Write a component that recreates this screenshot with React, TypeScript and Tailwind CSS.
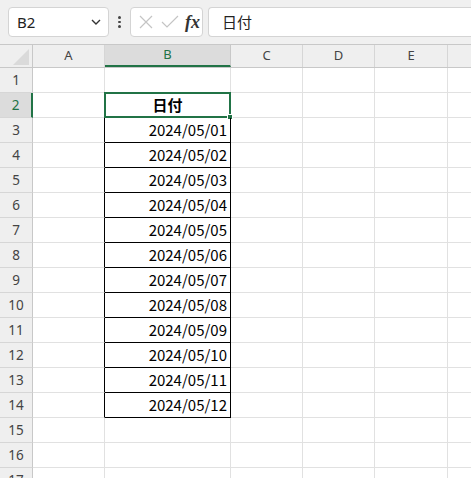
import React from "react";

const cols = [
  { key: "A", w: "w-[72px]" },
  { key: "B", w: "w-[126px]" },
  { key: "C", w: "w-[72px]" },
  { key: "D", w: "w-[72px]" },
  { key: "E", w: "w-[73px]" },
  { key: "F", w: "w-[60px]" },
];

const dates = [
  "2024/05/01",
  "2024/05/02",
  "2024/05/03",
  "2024/05/04",
  "2024/05/05",
  "2024/05/06",
  "2024/05/07",
  "2024/05/08",
  "2024/05/09",
  "2024/05/10",
  "2024/05/11",
  "2024/05/12",
];

const font = { fontFamily: '"Noto Sans CJK JP", "Noto Sans", sans-serif' };

const Toolbar: React.FC = () => (
  <div className="flex h-[44px] items-start bg-[#f0f0f0] pt-[7px] pl-[8px]">
    <div className="flex h-[30px] w-[101px] items-center justify-between rounded-[4px] border border-[#d4d4d4] bg-white pl-[8px] pr-[6px]">
      <span className="text-[15px] text-[#222]">B2</span>
      <svg width="12" height="12" viewBox="0 0 12 12">
        <path d="M2 4 L6 8 L10 4" fill="none" stroke="#333" strokeWidth="1.4" />
      </svg>
    </div>
    <div className="flex h-[30px] w-[21px] flex-col items-center justify-center gap-[2px]">
      <span className="h-[2.5px] w-[2.5px] rounded-full bg-[#444]" />
      <span className="h-[2.5px] w-[2.5px] rounded-full bg-[#444]" />
      <span className="h-[2.5px] w-[2.5px] rounded-full bg-[#444]" />
    </div>
    <div className="flex h-[30px] w-[73px] items-center rounded-[4px] border border-[#d4d4d4] bg-white pl-[6px]">
      <svg width="16" height="16" viewBox="0 0 16 16" className="ml-[1px]">
        <path d="M2 2 L14 14 M14 2 L2 14" fill="none" stroke="#c4c4c4" strokeWidth="1.2" />
      </svg>
      <svg width="18" height="16" viewBox="0 0 18 16" className="ml-[7px]">
        <path d="M1 8 L6 13 L17 2" fill="none" stroke="#c4c4c4" strokeWidth="1.2" />
      </svg>
      <span
        className="ml-[6px] text-[18px] font-bold italic leading-none text-[#333]"
        style={{ fontFamily: '"Liberation Serif", "DejaVu Serif", serif' }}
      >
        fx
      </span>
    </div>
    <div className="ml-[5px] flex h-[30px] flex-1 items-center rounded-l-[4px] border border-r-0 border-[#d4d4d4] bg-white pl-[13px]">
      <span className="text-[15px] text-[#222]" style={font}>
        日付
      </span>
    </div>
  </div>
);

const HeaderRow: React.FC = () => (
  <div className="flex h-[24px] border-t border-b border-[#c8c8c8] bg-[#efefef]">
    <div className="relative w-[33px] shrink-0 border-r border-[#c8c8c8]">
      <svg width="16" height="16" viewBox="0 0 16 16" className="absolute right-[3px] bottom-[2px]">
        <path d="M16 0 L16 16 L0 16 Z" fill="#dadada" />
      </svg>
    </div>
    {cols.map((c) =>
      c.key === "B" ? (
        <div
          key={c.key}
          className={`${c.w} flex shrink-0 items-center justify-center border-r border-b-2 border-r-[#c8c8c8] border-b-[#217346] bg-[#dcdcdc] text-[13px] text-[#217346]`}
        >
          {c.key}
        </div>
      ) : (
        <div
          key={c.key}
          className={`${c.w} flex shrink-0 items-center justify-center border-r border-[#d6d6d6] text-[13px] text-[#444]`}
        >
          {c.key === "F" ? "" : c.key}
        </div>
      )
    )}
  </div>
);

const Row: React.FC<{ n: number }> = ({ n }) => {
  const selected = n === 2;
  const date = n >= 3 && n <= 14 ? dates[n - 3] : null;
  return (
    <div className="flex h-[25px]">
      <div
        className={`flex w-[33px] shrink-0 items-center justify-center border-b border-[#d6d6d6] text-[13.5px] ${
          selected
            ? "border-r-2 border-r-[#217346] bg-[#dcdcdc] text-[#217346]"
            : "border-r border-r-[#c8c8c8] bg-[#efefef] text-[#444]"
        }`}
      >
        {n}
      </div>
      {cols.map((c) => {
        if (c.key === "B") {
          const inTable = n >= 2 && n <= 14;
          return (
            <div
              key={c.key}
              className={`${c.w} relative flex shrink-0 items-center border-b border-r ${
                inTable ? "border-black" : "border-[#e1e1e1]"
              } ${selected ? "justify-center" : "justify-end pr-[3px]"} text-[15px] text-black`}
              style={font}
            >
              {selected && <span className="font-bold">日付</span>}
              {date}
              {selected && (
                <div className="absolute -top-[1px] -left-[1px] -right-[1px] -bottom-[1px] border-2 border-[#217346]">
                  <div className="absolute -right-[4px] -bottom-[4px] h-[6px] w-[6px] border border-white bg-[#217346]" />
                </div>
              )}
            </div>
          );
        }
        const leftOfTable = c.key === "A" && n >= 2 && n <= 14;
        return (
          <div
            key={c.key}
            className={`${c.w} shrink-0 border-b border-r border-b-[#e1e1e1] ${
              leftOfTable ? "border-r-black" : "border-r-[#e1e1e1]"
            }`}
          />
        );
      })}
    </div>
  );
};

const App: React.FC = () => {
  return (
    <div
      className="h-[478px] w-[471px] overflow-hidden bg-white"
      style={{ fontFamily: '"Noto Sans", "Liberation Sans", sans-serif' }}
    >
      <Toolbar />
      <HeaderRow />
      {Array.from({ length: 17 }, (_, i) => (
        <Row key={i} n={i + 1} />
      ))}
    </div>
  );
};

export default App;
